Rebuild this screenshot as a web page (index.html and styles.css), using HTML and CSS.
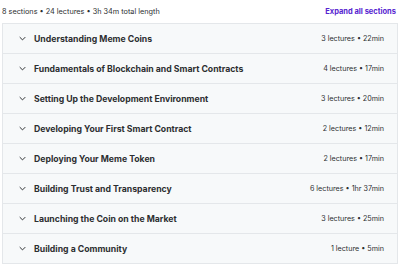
FILE: index.html
```html
<!DOCTYPE html>
<html lang="en">
<head>
    <meta charset="UTF-8">
    <title>Course content</title>
    <link rel="stylesheet" href="styles.css">
</head>
<body>
    <div class="curriculum">
        <div class="summary">
            <span>8 sections • 24 lectures • 3h 34m total length</span>
            <button class="expand-all">Expand all sections</button>
        </div>

        <div class="sections">
            <div class="section">
                <span class="chevron"><svg viewBox="0 0 10 6" width="7" height="5"><path d="M1 1l4 4 4-4" fill="none" stroke="currentColor" stroke-width="1.4"/></svg></span>
                <span class="title">Understanding Meme Coins</span>
                <span class="meta">3 lectures • 22min</span>
            </div>
            <div class="section">
                <span class="chevron"><svg viewBox="0 0 10 6" width="7" height="5"><path d="M1 1l4 4 4-4" fill="none" stroke="currentColor" stroke-width="1.4"/></svg></span>
                <span class="title">Fundamentals of Blockchain and Smart Contracts</span>
                <span class="meta">4 lectures • 17min</span>
            </div>
            <div class="section">
                <span class="chevron"><svg viewBox="0 0 10 6" width="7" height="5"><path d="M1 1l4 4 4-4" fill="none" stroke="currentColor" stroke-width="1.4"/></svg></span>
                <span class="title">Setting Up the Development Environment</span>
                <span class="meta">3 lectures • 20min</span>
            </div>
            <div class="section">
                <span class="chevron"><svg viewBox="0 0 10 6" width="7" height="5"><path d="M1 1l4 4 4-4" fill="none" stroke="currentColor" stroke-width="1.4"/></svg></span>
                <span class="title">Developing Your First Smart Contract</span>
                <span class="meta">2 lectures • 12min</span>
            </div>
            <div class="section">
                <span class="chevron"><svg viewBox="0 0 10 6" width="7" height="5"><path d="M1 1l4 4 4-4" fill="none" stroke="currentColor" stroke-width="1.4"/></svg></span>
                <span class="title">Deploying Your Meme Token</span>
                <span class="meta">2 lectures • 17min</span>
            </div>
            <div class="section">
                <span class="chevron"><svg viewBox="0 0 10 6" width="7" height="5"><path d="M1 1l4 4 4-4" fill="none" stroke="currentColor" stroke-width="1.4"/></svg></span>
                <span class="title">Building Trust and Transparency</span>
                <span class="meta">6 lectures • 1hr 37min</span>
            </div>
            <div class="section">
                <span class="chevron"><svg viewBox="0 0 10 6" width="7" height="5"><path d="M1 1l4 4 4-4" fill="none" stroke="currentColor" stroke-width="1.4"/></svg></span>
                <span class="title">Launching the Coin on the Market</span>
                <span class="meta">3 lectures • 25min</span>
            </div>
            <div class="section">
                <span class="chevron"><svg viewBox="0 0 10 6" width="7" height="5"><path d="M1 1l4 4 4-4" fill="none" stroke="currentColor" stroke-width="1.4"/></svg></span>
                <span class="title">Building a Community</span>
                <span class="meta">1 lecture • 5min</span>
            </div>
        </div>
    </div>
</body>
</html>
```

FILE: styles.css
```css
body {
    margin: 0;
    background: #fff;
    color: #2d2f31;
    font-family: Inter, 'Noto Sans', Arial, sans-serif;
}

.curriculum {
    padding: 0 2px;
}

.summary {
    display: flex;
    justify-content: space-between;
    align-items: center;
    height: 23px;
    padding-right: 2px;
    font-size: 7.3px;
    color: #2d2f31;
}

.expand-all {
    background: none;
    border: none;
    padding: 0;
    font-family: inherit;
    font-size: 7.5px;
    font-weight: 700;
    color: #5624d0;
    cursor: pointer;
}

.sections {
    border: 1px solid #e4e7ea;
}

.section {
    display: flex;
    align-items: center;
    height: 29px;
    padding: 0 13px 0 16px;
    background: #f7f9fa;
    border-bottom: 1px solid #e4e7ea;
}

.section:last-child {
    border-bottom: none;
}

.chevron {
    display: flex;
    width: 15px;
    color: #2d2f31;
}

.title {
    flex: 1;
    font-size: 8.7px;
    font-weight: 700;
}

.meta {
    font-size: 7.2px;
    color: #2d2f31;
}
```
